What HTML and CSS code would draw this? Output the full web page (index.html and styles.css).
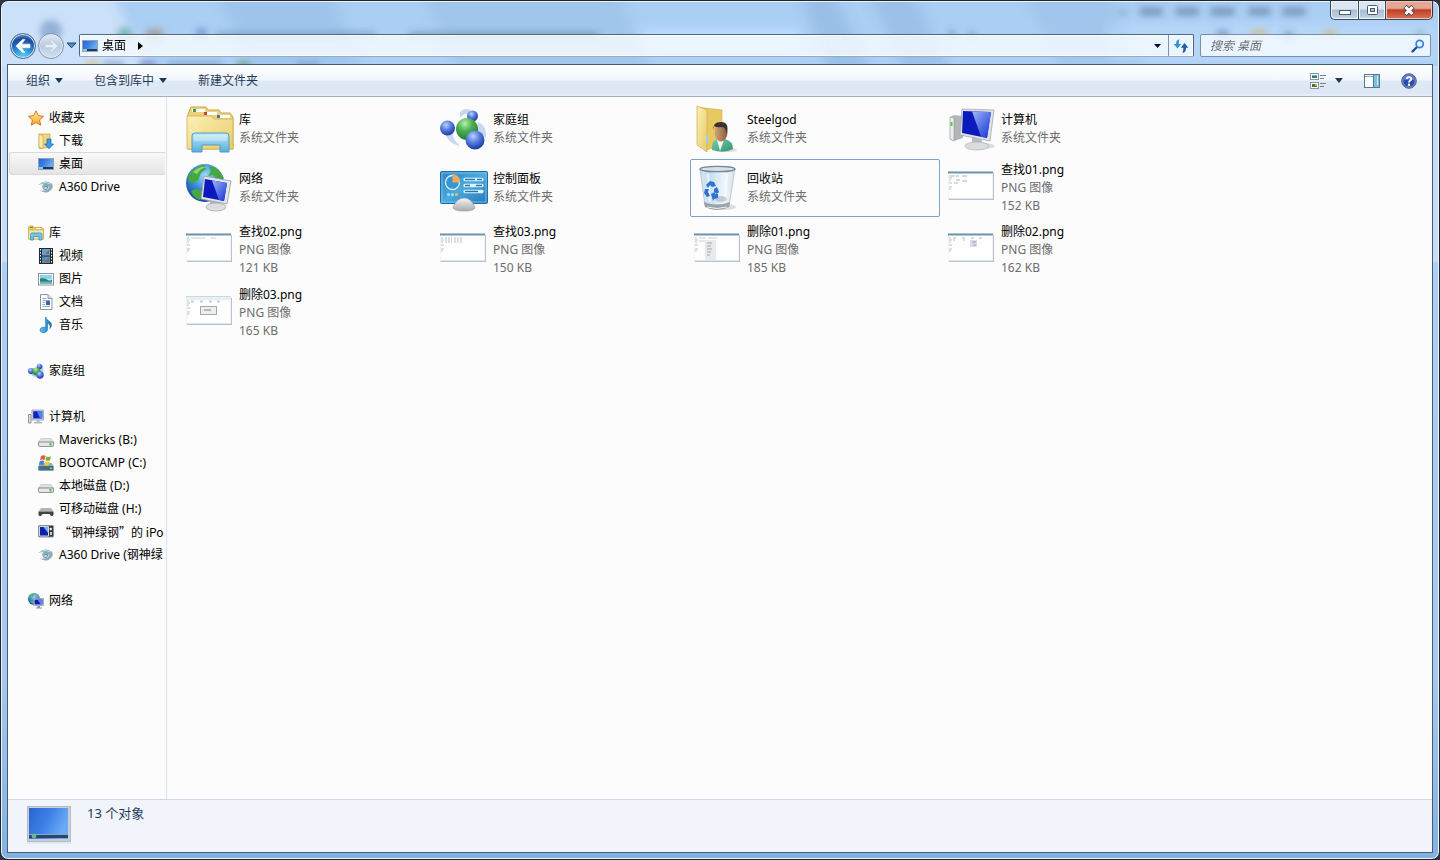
FILE: index.html
```html
<!DOCTYPE html>
<html lang="zh-CN">
<head>
    <meta charset="UTF-8">
    <meta name="viewport" content="width=device-width, initial-scale=1.0">
    <title>桌面</title>
    <link rel="stylesheet" href="styles.css">
</head>
<body>
<div class="window">
    <!-- Aero glass: slanted light streaks and whatever is behind the window -->
    <svg class="glass" viewBox="0 0 1440 64" preserveAspectRatio="none" aria-hidden="true">
        <defs>
            <filter id="soft" x="-20%" y="-50%" width="140%" height="200%"><feGaussianBlur stdDeviation="6"/></filter>
            <filter id="soft2" x="-20%" y="-100%" width="140%" height="300%"><feGaussianBlur stdDeviation="3"/></filter>
        </defs>
        <g filter="url(#soft)">
            <path d="M-20 -10H110L150 74H-20Z" fill="#d3e5fa" opacity=".8"/>
            <path d="M215 -10H330L362 74H255Z" fill="#8fb7e0" opacity=".4"/>
            <path d="M422 -10H615L655 74H460Z" fill="#97bde4" opacity=".5"/>
            <path d="M800 -10H832L875 74H830Z" fill="#84add9" opacity=".45"/>
            <path d="M870 -10H910L955 74H905Z" fill="#8fb5de" opacity=".55"/>
            <path d="M1025 -10H1110L1150 74H1065Z" fill="#93b9e2" opacity=".4"/>
            <path d="M640 26H800V50H640Z" fill="#c3e1ff" opacity=".7"/>
            <path d="M1110 20H1440V60H1110Z" fill="#bcdafa" opacity=".6"/>
        </g>
        <g filter="url(#soft2)">
            <circle cx="49" cy="29" r="11" fill="#7e9cc8" opacity=".7"/>
            <circle cx="123" cy="33" r="8" fill="#63aaa0" opacity=".7"/>
            <path d="M145 27h16v12h-16z" fill="#a0907e" opacity=".7"/>
            <circle cx="200" cy="31" r="6" fill="#6c93c6" opacity=".7"/>
            <path d="M215 30h160v4H215zM408 30h190v5H408z" fill="#5e7ea2" opacity=".6"/>
            <path d="M1141 5h23v9h-23zM1177 5h23v9h-23zM1212 5h24v9h-24zM1250 5h22v9h-22zM1284 5h23v9h-23z" fill="#52729a" opacity=".5"/>
            <path d="M1120 9h8v3h-8zM970 30h6v6h-6zM950 28h5v8h-5zM1218 28h12v8h-12zM1285 30h10v8h-10z" fill="#52729a" opacity=".5"/>
            <path d="M1252 28h16v8h-16zM1326 28h12v8h-12z" fill="#d3b65e" opacity=".6"/>
            <circle cx="1422" cy="33" r="5" fill="#7fb0a8" opacity=".5"/>
            <path d="M84 60h14v4H84z" fill="#cdb976"/>
            <path d="M138 60h16v4h-16z" fill="#6670b8"/>
            <path d="M235 60h14v4h-14z" fill="#5a9166"/>
            <path d="M166 60h55v4h-55zM296 60h22v4h-22zM102 60h20v4h-20z" fill="#7d9cc4"/>
        </g>
    </svg>

    <header class="titlebar">
        <div class="caption">
            <button class="cap cap-min" aria-label="最小化"><svg width="14" height="7" viewBox="0 0 14 7"><rect x="1.5" y="1.5" width="11" height="4" fill="#fff" stroke="#4b5a6d"/></svg></button>
            <button class="cap cap-max" aria-label="最大化"><svg width="13" height="11" viewBox="0 0 13 11"><rect x="1.5" y=".5" width="10" height="9" rx="1" fill="#fff" stroke="#4b5a6d"/><rect x="4.5" y="3.5" width="4" height="3" fill="#a9c2de" stroke="#4b5a6d"/></svg></button>
            <button class="cap cap-close" aria-label="关闭"><svg width="14" height="11" viewBox="0 0 14 11"><path d="M3 1.500L11 9.500M11 1.500L3 9.500" stroke="#59464f" stroke-width="4.800"/><path d="M3.500 2L10.500 9M10.500 2L3.500 9" stroke="#fff" stroke-width="3"/></svg></button>
        </div>
        <div class="navbar">
            <div class="travel">
                <button class="round back" aria-label="返回"><svg width="16" height="16" viewBox="0 0 16 16"><path d="M1 8L7.500 1.500H10L6.500 6.200H15V9.800H6.500L10 14.500H7.500Z" fill="#fff" stroke="#fff" stroke-width=".6"/></svg></button>
                <button class="round forward" aria-label="前进"><svg width="16" height="16" viewBox="0 0 16 16"><path d="M15 8L8.500 2H6.500L9.500 6.300H2V9.700H9.500L6.500 14H8.500Z" fill="#e6eef5" stroke="#bcc9d6" stroke-width=".7"/></svg></button>
                <button class="recent" aria-label="最近浏览的位置"><svg width="11" height="7" viewBox="0 0 11 7"><path d="M1 1H10L5.500 5.800Z" fill="#4c8fcf" stroke="#20466f"/></svg></button>
            </div>
            <div class="address">
                <svg class="i16" viewBox="0 0 16 16"><use href="#desk"/></svg>
                <button class="crumb">桌面</button>
                <button class="crumb-arrow" aria-label="展开"><svg width="5" height="8" viewBox="0 0 5 8"><path d="M0 0L5 4L0 8Z"/></svg></button>
                <button class="drop" aria-label="以前的位置"><svg width="7" height="4" viewBox="0 0 7 4"><path d="M0 0H7L3.500 4Z" fill="#000c3d"/></svg></button>
                <button class="refresh" aria-label="刷新"><svg width="16" height="16" viewBox="0 0 16 16"><path d="M6.500 1.500C4 1.500 3 3.500 3 6H.8L4.500 10.500L8.200 6H5.800C5.800 4 5.800 3 6.500 1.500Z" fill="#3a93d8"/><path d="M9.500 15C12 15 13 13 13 9.800H15.300L11.500 5L7.800 9.800H10.300C10.300 12 10.200 13.500 9.500 15Z" fill="#1f5dab"/></svg></button>
            </div>
            <label class="search">
                <input type="text" placeholder="搜索 桌面" aria-label="搜索 桌面">
                <svg width="14" height="14" viewBox="0 0 14 14"><path d="M6 8L1.500 12.500" stroke="#1c4b96" stroke-width="2.400" stroke-linecap="round"/><circle cx="8.700" cy="5" r="3.600" fill="#e3f2ff" stroke="#3a82d0" stroke-width="1.700"/></svg>
            </label>
        </div>
    </header>

    <div class="client">
        <div class="toolbar">
            <button class="tool">组织 <svg width="8" height="5" viewBox="0 0 8 5"><path d="M0 0H8L4 5Z"/></svg></button>
            <button class="tool">包含到库中 <svg width="8" height="5" viewBox="0 0 8 5"><path d="M0 0H8L4 5Z"/></svg></button>
            <button class="tool">新建文件夹</button>
            <div class="tool-icons">
                <button class="tool view" aria-label="更改您的视图">
                    <svg width="17" height="16" viewBox="0 0 17 16"><rect x=".5" y=".5" width="8" height="6" fill="#fff" stroke="#8b95a2"/><path d="M2 2h5v1H2z" fill="#69b4e8"/><path d="M2 3h5v2H2z" fill="#2f7d62"/><rect x=".5" y="9.500" width="8" height="6" fill="#fff" stroke="#8b95a2"/><path d="M2 11h3v3H2z" fill="#3a7a2d"/><path d="M5 11h2v2H5z" fill="#e0aa28"/><path d="M5 13h2v1H5z" fill="#3567b0"/><path d="M10 2.500h6M10 5.500h4M10 10.500h6M10 13.500h4" stroke="#6c7f9b"/></svg>
                    <svg width="8" height="5" viewBox="0 0 8 5"><path d="M0 0H8L4 5Z"/></svg>
                </button>
                <button class="tool" aria-label="显示预览窗格"><svg width="16" height="14" viewBox="0 0 16 14"><rect x=".5" y=".5" width="15" height="13" fill="#fff" stroke="#587796"/><path d="M1 2.500H10" stroke="#91a7bb"/><rect x="10" y="1" width="5" height="12" fill="#7dc3df"/><path d="M9.500 1V13" stroke="#587796"/><path d="M13 2h1v9h-1z" fill="#c3eefa"/></svg></button>
                <button class="tool" aria-label="获取帮助"><svg width="16" height="16" viewBox="0 0 16 16"><circle cx="8" cy="8" r="7.300" fill="#2a4bac" stroke="#606978"/><circle cx="8" cy="8" r="6.200" fill="none" stroke="#a9bdf0" stroke-width=".7"/><path d="M2.500 7A5.500 5 0 0 1 13.500 7Z" fill="#5579cc"/><path d="M5.700 6C5.800 3.500 10.300 3.500 10.300 6C10.300 7.600 8 7.500 8 9.400" fill="none" stroke="#fff" stroke-width="1.900"/><circle cx="8" cy="11.700" r="1.200" fill="#fff"/></svg></button>
            </div>
        </div>

        <div class="body">
            <nav class="tree">
                <ul>
                    <li><a href="#" class="root"><svg class="i16" viewBox="0 0 16 16"><path d="M8 .8L10.300 5.700L15.500 6.300L11.600 9.900L12.700 15.200L8 12.500L3.300 15.200L4.400 9.900L.5 6.300L5.700 5.700Z" fill="url(#gStar)" stroke="#d9761c"/></svg>收藏夹</a></li>
                    <li><a href="#"><svg class="i16" viewBox="0 0 16 16"><path d="M1 1H12V14L4 15.500H1Z" fill="#edd57e" stroke="#c3a449" stroke-width=".7"/><path d="M1 1L5 3V15.800L1 14Z" fill="#f9ebaa" stroke="#c3a449" stroke-width=".6"/><path d="M9 6h4v5h2.500L11 15.700L6.500 11H9Z" fill="#3d9ce5" stroke="#1763a8" stroke-width=".7"/></svg>下载</a></li>
                    <li><a href="#" class="selected"><svg class="i16" viewBox="0 0 16 16"><use href="#desk"/></svg>桌面</a></li>
                    <li><a href="#"><svg class="i16" viewBox="0 0 16 16"><use href="#a360"/></svg>A360 Drive</a></li>
                </ul>
                <ul>
                    <li><a href="#" class="root"><svg class="i16" viewBox="0 0 16 16"><path d="M.5 2.500L1.500 1H5L6 2.500H14L15.500 4V14H.5Z" fill="#e6cb6c" stroke="#c3a24a" stroke-width=".8"/><path d="M2 2h3v1H2z" fill="#4aa145"/><path d="M8 3h5v1H8z" fill="#fff"/><path d="M.5 5H15.500V14H.5Z" fill="#f6e7a5" stroke="#cdae50" stroke-width=".7"/><path d="M2.500 15V9.500Q2.500 8 4 8H12.500Q14 8 14 9.500V15H11V11.500H5.500V15Z" fill="#74c4e8" stroke="#3f91be" stroke-width=".8"/></svg>库</a></li>
                    <li><a href="#"><svg class="i16" viewBox="0 0 16 16"><path d="M1 0H15V16H1Z" fill="#22282e"/><path d="M4 1H12V7.500H4Z" fill="#5ba4d4"/><path d="M4 8.500H12V15H4Z" fill="#4a93c6"/><path d="M5 2L8 5L11 2V6H8ZM5 10L8 13L11 10V14H7Z" fill="#b7542d"/><path d="M2.500 1V16M13.500 1V16" stroke="#fff" stroke-dasharray="1.500 1.500"/></svg>视频</a></li>
                    <li><a href="#"><svg class="i16" viewBox="0 0 16 16"><rect x=".5" y="2.500" width="15" height="11.500" fill="#fff" stroke="#8a939b"/><path d="M2 4H14V8.500H2Z" fill="#90d0ef"/><path d="M2 7.500Q6 6.500 9 8.500T14 8.500V12.500H2Z" fill="#2a7f72"/><path d="M2 10.500H14V12.500H2Z" fill="#5db5c9"/></svg>图片</a></li>
                    <li><a href="#"><svg class="i16" viewBox="0 0 16 16"><path d="M2.500 .5H10L14 4.500V15.500H2.500Z" fill="#fff" stroke="#8a97a6"/><path d="M10 .5V4.500H14" fill="#dbe4ee" stroke="#8a97a6"/><path d="M4.500 4.500H8.500M4.500 6.500H12M4.500 8.500H7M4.500 10.500H7M4.500 12.500H12" stroke="#8fa7c3"/><path d="M8 7h4v4H8z" fill="#3765a2"/></svg>文档</a></li>
                    <li><a href="#"><svg class="i16" viewBox="0 0 16 16"><path d="M8 0C8 4 14 4 13.500 8.500C13.300 10 12.500 10.800 11.800 11.500C13 8 11 7 9.500 6.500V12C9.500 17 2 16.500 2 13C2 10.500 5 9.700 7.600 10.700V0Z" fill="url(#gNote)" stroke="#1c69ab" stroke-width=".6"/></svg>音乐</a></li>
                </ul>
                <ul>
                    <li><a href="#" class="root"><svg class="i16" viewBox="0 0 16 16"><path d="M9 2Q14 0 15.500 5V11H12ZM1 9Q3 14 9 14L6 9Z" fill="#b8cfeb"/><circle cx="3" cy="8" r="3" fill="url(#gBlue)"/><circle cx="11.500" cy="3.500" r="2.800" fill="url(#gBlue)"/><circle cx="8.500" cy="8.500" r="4" fill="url(#gGreen)"/><circle cx="12" cy="12" r="3.700" fill="url(#gBlue)"/></svg>家庭组</a></li>
                </ul>
                <ul>
                    <li><a href="#" class="root"><svg class="i16" viewBox="0 0 16 16"><path d="M.5 5.500H3V14H.5Z" fill="#dadcde" stroke="#81878d" stroke-width=".8"/><path d="M4 1H15.500V11H4Z" fill="#d8dde3" stroke="#8b9299" stroke-width=".7"/><path d="M5.200 2.200H14.300V9.500H5.200Z" fill="#0c23c0"/><path d="M9 2.200H14.300V9.500H12Z" fill="#4f83ee"/><path d="M8.500 11H11.500V13H14V14.500H6V13H8.500Z" fill="#b5bac0"/></svg>计算机</a></li>
                    <li><a href="#"><svg class="i16" viewBox="0 0 16 16"><use href="#drive"/></svg>Mavericks (B:)</a></li>
                    <li><a href="#"><svg class="i16" viewBox="0 0 16 16"><path d="M2.500 8H13.500L15.500 11V15.500H.5V11Z" fill="#8fabba"/><path d="M.5 11H15.500V15.500H.5Z" fill="#456e85"/><path d="M12 12.500h2v1.500h-2z" fill="#70e858"/><path d="M3 1Q5.500-.5 7.500 1L6.500 5Q4.500 4 2 5Z" fill="#e85e29"/><path d="M8.300 1.500Q10.500 2.500 13 1.300L12 5.300Q9.500 6.300 7.500 5.300Z" fill="#6fb43d"/><path d="M1.800 6Q4.500 4.900 6.300 6L5.300 10Q3 9 .8 10Z" fill="#3c85d4"/><path d="M7.200 6.300Q9.500 7.300 11.800 6.300L10.800 10.300Q8.500 11.200 6.200 10.300Z" fill="#f5c732"/></svg>BOOTCAMP (C:)</a></li>
                    <li><a href="#"><svg class="i16" viewBox="0 0 16 16"><use href="#drive"/></svg>本地磁盘 (D:)</a></li>
                    <li><a href="#"><svg class="i16" viewBox="0 0 16 16"><path d="M3 7H13L15.500 10.500H.5Z" fill="#b1b3b5"/><path d="M.5 10.500H15.500V13.500Q15.500 15 14 15H13L11.500 13H4.500L3 15H2Q.5 15 .5 13.500Z" fill="#414446"/></svg>可移动磁盘 (H:)</a></li>
                    <li><a href="#"><svg class="i16" viewBox="0 0 16 16"><rect x=".5" y="1.500" width="15" height="11.500" rx="1" fill="#343a40" stroke="#8d939a"/><path d="M2 3H10V11.500H2Z" fill="#0721b2"/><path d="M5.500 3H10V9Z" fill="#87a8f2"/><path d="M1.500 2.500H10.500V12H1.500Z" fill="none" stroke="#fff" stroke-width=".8"/><circle cx="12.800" cy="5" r="1.200" fill="#eef1f4"/><path d="M12 8h2v3h-2z" fill="#c8ced5"/></svg><span class="cjk">“钢神绿钢”的 iPo</span></a></li>
                    <li><a href="#"><svg class="i16" viewBox="0 0 16 16"><use href="#a360"/></svg>A360 Drive (钢神绿</a></li>
                </ul>
                <ul>
                    <li><a href="#" class="root"><svg class="i16" viewBox="0 0 16 16"><circle cx="6" cy="6" r="6" fill="url(#gGlobe)"/><path d="M1.500 3Q4 .3 7 .5L5 4L2.500 5.500ZM9 2L11.500 4L9.500 5ZM2 8L5 8.500L4.500 11Z" fill="#5cbf50"/><path d="M5.500 5.500H15.500V12.500H5.500Z" fill="#dfe4e9" stroke="#8f969e" stroke-width=".7"/><path d="M6.500 6.500H14.500V11.500H6.500Z" fill="#0b19bd"/><path d="M9.500 6.500H14.500V11.500H12.500Z" fill="#5583ee"/><path d="M9.500 13H12V14.500H14V15.500H8V14.500H9.500Z" fill="#8f969c"/></svg>网络</a></li>
                </ul>
            </nav>

            <main class="files">
                <a href="#" class="tile"><svg class="i48" viewBox="0 0 48 48"><use href="#library"/></svg><span class="info"><b>库</b><span>系统文件夹</span></span></a>
                <a href="#" class="tile">
                    <svg class="i48" viewBox="0 0 48 48"><path d="M4 24Q6 38 20 41Q11 33 12 24ZM20 7Q24 2 31 5L27 9Q24 9 20 12ZM38 17Q47 20 46 33Q42 28 37 31Z" fill="#b8cfeb" opacity=".8"/><circle cx="7.500" cy="23" r="7.500" fill="url(#gBlue)"/><circle cx="32.500" cy="11" r="5.500" fill="url(#gBlue)"/><circle cx="27" cy="24" r="11" fill="url(#gGreen)"/><circle cx="35" cy="35" r="9.500" fill="url(#gBlue)"/></svg>
                    <span class="info"><b>家庭组</b><span>系统文件夹</span></span>
                </a>
                <a href="#" class="tile">
                    <svg class="i48" viewBox="0 0 48 48"><path d="M3 2L28 5V40L12 45Z" fill="#e8c95f" stroke="#d0ad45" stroke-width=".6"/><path d="M3 1L13 5V47L3 40Z" fill="url(#gFolder)" stroke="#cfae4d" stroke-width=".7"/><path d="M12 30L14 29V38L12 39Z" fill="#a8cbdb"/><ellipse cx="33" cy="45" rx="10" ry="2" fill="#000" opacity=".12"/><path d="M18 45Q17 35 24 34H31Q39 36 39 44Q30 49 18 45Z" fill="url(#gCoat)"/><path d="M23 35L26 46L30 35Z" fill="#edf7f5"/><ellipse cx="27" cy="27" rx="6.500" ry="9.500" fill="url(#gSkin)"/><path d="M20 25Q18 17 27 17Q36 17 32.500 29Q32 22 27.500 22Q23 23 20 21Z" fill="#39332f"/></svg>
                    <span class="info"><b>Steelgod</b><span>系统文件夹</span></span>
                </a>
                <a href="#" class="tile">
                    <svg class="i48" viewBox="0 0 48 48"><ellipse cx="34" cy="41" rx="13" ry="3" fill="#000" opacity=".12"/><path d="M2 12L6 10L15 11V33L6 36L2 34Z" fill="#b2b6b9"/><path d="M2 12L6 13V36L2 34Z" fill="#eceeef" stroke="#8e9396" stroke-width=".6"/><path d="M3.500 17v4" stroke="#55cd33" stroke-width="2"/><path d="M24 32L34 35V42H24Z" fill="#b9bec3"/><ellipse cx="29" cy="41" rx="12" ry="4" fill="#dadde0" stroke="#a3a8ad" stroke-width=".6"/><path d="M14 4L46 5L42 36L12 30Z" fill="#dfe3e7" stroke="#999fa5" stroke-width=".7"/><path d="M15 6L43 7L39 33L14 28Z" fill="#0b19bd"/><path d="M24 6.500L43 7L39 33L33 31.500Z" fill="url(#gScreen)"/></svg>
                    <span class="info"><b>计算机</b><span>系统文件夹</span></span>
                </a>

                <a href="#" class="tile">
                    <svg class="i48" viewBox="0 0 48 48"><circle cx="19" cy="19" r="19" fill="url(#gGlobe)"/><path d="M4 9Q11 1 19 1L20 5L15 9L12 16L8 19L3 18Q1 13 4 9ZM23 2Q33 3 38 14L32 15L27 11L22 12L25 7ZM9 25L17 27L18 33L13 36Q7 33 5 27Z" fill="#46a83e"/><path d="M7 8Q13 2 22 3Q14 4 11 10Z" fill="#e1fac5" opacity=".5"/><path d="M24 34H34V43H24Z" fill="#b5bbc0"/><ellipse cx="30" cy="43" rx="10" ry="4" fill="#dcdfe2" stroke="#9ba1a6" stroke-width=".7"/><path d="M18 12L45 17L41 40L15 35Z" fill="#e3e7ea" stroke="#959ba1" stroke-width=".8"/><path d="M19 15L41 19L38 37L17 33Z" fill="#0b19bd"/><path d="M26 16.500L41 19L38 37L33 36Z" fill="url(#gScreen)"/></svg>
                    <span class="info"><b>网络</b><span>系统文件夹</span></span>
                </a>
                <a href="#" class="tile">
                    <svg class="i48" viewBox="0 0 48 48"><rect x=".5" y="7.500" width="47" height="32" rx="1" fill="url(#gPanel)" stroke="#1e6fab"/><rect x="2" y="9" width="44" height="29" fill="none" stroke="#82cbee" stroke-width=".8"/><circle cx="12.500" cy="18.500" r="7" fill="#3995d0" stroke="#d3f1ff" stroke-width="1.300"/><path d="M12.500 18.500V10A8 8 0 0 1 20 18.500Z" fill="#f3aa58"/><path d="M25 15.500H42M25 21.500H42M25 27.500H42" stroke="#e0f5ff" stroke-width="3.400" stroke-linecap="round"/><path d="M25 15.500H35M37 15.500H42M25 21.500H30M36 21.500H42M25 27.500H38" stroke="#2a75b0" stroke-width="1.400"/><circle cx="8.500" cy="30.500" r="1.500" fill="#91e7ff"/><circle cx="12.500" cy="30.500" r="1.500" fill="#91e7ff"/><circle cx="16.500" cy="30.500" r="1.500" fill="#f5bc58"/><path d="M13 43Q17 34 24 34T35 43Q35 47 24 47T13 43Z" fill="url(#gGrey)" stroke="#92979b" stroke-width=".6"/></svg>
                    <span class="info"><b>控制面板</b><span>系统文件夹</span></span>
                </a>
                <a href="#" class="tile focused">
                    <svg class="i48" viewBox="0 0 48 48"><ellipse cx="32" cy="43" rx="10" ry="3" fill="#000" opacity=".12"/><path d="M6 5L11 42Q23 49 35 42L41 5Z" fill="url(#gBin)" stroke="#aeb9c2" stroke-width=".7"/><path d="M14 10L16 38M33 10L31 38" stroke="#fff" stroke-width="2" opacity=".65"/><ellipse cx="27" cy="35" rx="6" ry="3" fill="#9aa5b0" opacity=".5"/><path d="M10 38Q22 43 36 38L35 43Q23 49 11 43Z" fill="#8f969c" opacity=".85"/><path d="M13 43Q23 46 33 43" stroke="#eef0f2" fill="none"/><ellipse cx="23.500" cy="5" rx="17.500" ry="2.700" fill="#d4e2ee" stroke="#77838c" stroke-width="1.300"/><path d="M12 21L16 17L20 18L22 22L18 23L16 21L14 24ZM11 25L15 25L14 28L16 32L13 33L10 29ZM17 30L21 28V30H24V34L20 35L19 37ZM20 25L23 23L25 28L23 30L20 28Z" fill="#2e72d2"/></svg>
                    <span class="info"><b>回收站</b><span>系统文件夹</span></span>
                </a>
                <a href="#" class="tile">
                    <svg class="i48" viewBox="0 0 48 48"><use href="#shot"/><path d="M3 12h4M8 12h3M14 12h5M8 16h4M6 19h4M14 17h5" stroke="#7795ad" opacity=".65"/></svg>
                    <span class="info"><b>查找01.png</b><span>PNG 图像</span><span>152 KB</span></span>
                </a>

                <a href="#" class="tile">
                    <svg class="i48" viewBox="0 0 48 48"><use href="#shot"/><path d="M5 12h14M25 12h5" stroke="#78b39a" opacity=".5"/></svg>
                    <span class="info"><b>查找02.png</b><span>PNG 图像</span><span>121 KB</span></span>
                </a>
                <a href="#" class="tile">
                    <svg class="i48" viewBox="0 0 48 48"><use href="#shot"/><path d="M5 12h7M14 12h9M5 14h7M14 14h9M5 16h7M14 16h9" stroke="#81909d" stroke-dasharray="2 1" opacity=".55"/></svg>
                    <span class="info"><b>查找03.png</b><span>PNG 图像</span><span>150 KB</span></span>
                </a>
                <a href="#" class="tile">
                    <svg class="i48" viewBox="0 0 48 48"><use href="#shot"/><path d="M5 12h7M14 12h9M5 15h16" stroke="#81909d" opacity=".4"/><path d="M11 14h11v20H11z" fill="#e8eaec"/><path d="M13 17h5M13 20h4M13 23h5M13 26h4M13 29h3" stroke="#727f89" opacity=".6"/></svg>
                    <span class="info"><b>删除01.png</b><span>PNG 图像</span><span>185 KB</span></span>
                </a>
                <a href="#" class="tile">
                    <svg class="i48" viewBox="0 0 48 48"><use href="#shot"/><path d="M5 12h3M14 12h3M23 12h3M31 12h3M5 14h2M15 14h2" stroke="#5080a6" opacity=".5"/><path d="M22 14h7v7h-7z" fill="#d9dfe5"/><path d="M24 16h4M25 19h3" stroke="#98a5b1" fill="none"/></svg>
                    <span class="info"><b>删除02.png</b><span>PNG 图像</span><span>162 KB</span></span>
                </a>

                <a href="#" class="tile">
                    <svg class="i48" viewBox="0 0 48 48"><use href="#shot"/><path d="M0 7.500h45V11H0z" fill="#e6f0f3"/><path d="M5 12.500h3M14 12.500h3M23 12.500h3M31 12.500h3" stroke="#658ba7" stroke-width="2" opacity=".4"/><rect x="14.500" y="17.500" width="16" height="8" fill="#eceef0" stroke="#a1a9af"/><path d="M18 21h7" stroke="#7b858c"/></svg>
                    <span class="info"><b>删除03.png</b><span>PNG 图像</span><span>165 KB</span></span>
                </a>
            </main>
        </div>

        <footer class="details">
            <svg width="44" height="38" viewBox="0 0 44 38"><rect x=".5" y=".5" width="43" height="35" fill="#c9cfd5" stroke="#b4bbc2"/><path d="M2 2H41V33H2Z" fill="url(#gDesk)"/><path d="M2 29H41V32H2Z" fill="#27476c"/><path d="M2 28.500H41" stroke="#84a5ce"/><circle cx="7" cy="30" r="2.400" fill="#69b889"/><path d="M0 37H44" stroke="#000" opacity=".1"/></svg>
            <span>13 个对象</span>
        </footer>
    </div>
</div>

<!-- Shared icons -->
<svg class="sprite" aria-hidden="true">
    <defs>
        <linearGradient id="gStar" x2="0" y2="1"><stop stop-color="#fff3a0"/><stop offset="1" stop-color="#f7a02b"/></linearGradient>
        <linearGradient id="gNote"><stop stop-color="#59c5f5"/><stop offset="1" stop-color="#1970c0"/></linearGradient>
        <linearGradient id="gFolder" x2="1" y2="1"><stop stop-color="#fcf0b5"/><stop offset="1" stop-color="#e8cb69"/></linearGradient>
        <linearGradient id="gCoat" x2="1" y2="1"><stop stop-color="#82c9a9"/><stop offset="1" stop-color="#2e9673"/></linearGradient>
        <linearGradient id="gSkin"><stop stop-color="#d5a67b"/><stop offset="1" stop-color="#865a3c"/></linearGradient>
        <linearGradient id="gScreen" x2="1" y2="1"><stop stop-color="#9db8f7"/><stop offset="1" stop-color="#1530d4"/></linearGradient>
        <linearGradient id="gPanel" x2="1" y2="1"><stop stop-color="#2c83c5"/><stop offset=".5" stop-color="#4ba9dd"/><stop offset="1" stop-color="#2577b8"/></linearGradient>
        <linearGradient id="gGrey" x2="0" y2="1"><stop stop-color="#f4f5f6"/><stop offset="1" stop-color="#a6abaf"/></linearGradient>
        <linearGradient id="gBin"><stop stop-color="#d5e5f0"/><stop offset=".3" stop-color="#c9dff3"/><stop offset=".7" stop-color="#eff6fb"/><stop offset="1" stop-color="#d6e1e9"/></linearGradient>
        <linearGradient id="gDesk" x2="1" y2=".4"><stop stop-color="#2865d2"/><stop offset=".5" stop-color="#3b7ee5"/><stop offset="1" stop-color="#6babf5"/></linearGradient>
        <linearGradient id="gTray" x2="0" y2="1"><stop stop-color="#c5ecf9"/><stop offset="1" stop-color="#55addb"/></linearGradient>
        <radialGradient id="gBlue" cx=".4" cy=".3" r=".65"><stop stop-color="#bcd3ff"/><stop offset=".5" stop-color="#5c80e0"/><stop offset="1" stop-color="#2442ab"/></radialGradient>
        <radialGradient id="gGreen" cx=".4" cy=".25" r=".75"><stop stop-color="#b9efb2"/><stop offset=".45" stop-color="#4cb050"/><stop offset="1" stop-color="#1f7d33"/></radialGradient>
        <radialGradient id="gGlobe" cx=".5" cy=".3" r=".7"><stop stop-color="#9edcff"/><stop offset=".5" stop-color="#3b8fda"/><stop offset="1" stop-color="#17479f"/></radialGradient>

        <symbol id="desk" viewBox="0 0 16 16"><path d="M0 2H16V14H0Z" fill="#8fa3b9"/><path d="M1 3H15V11H1Z" fill="url(#gDesk)"/><path d="M1 11H15V13H1Z" fill="#26384f"/><path d="M1 11h4v2H1z" fill="#7ad0eb"/></symbol>
        <symbol id="a360" viewBox="0 0 16 16"><path d="M0 6Q7 0 13.500 4.500Q17 9 10.500 13Q6 14.500 2 11.500Q7 12.500 10 10Q12.500 7 8 7Q5 7.500 5 9Q2.500 7 6 5.500Q3 5 0 6Z" fill="#8eabbb"/><path d="M5 9Q6 6.500 9 7T8 11Q5 11.500 5 9Z" fill="#5f8ba4"/><path d="M6 9Q7 7.500 8.500 8.200T7.500 10Q6.300 10 6 9Z" fill="#dfeaf0"/><path d="M2 5.300Q7 2 12.500 5" fill="none" stroke="#cfe0e8" stroke-width=".9"/></symbol>
        <symbol id="drive" viewBox="0 0 16 16"><path d="M3 6.500H13L15.500 10H.5Z" fill="#dfe0e1" stroke="#b5b7b9" stroke-width=".5"/><path d="M.5 10H15.500V13Q15.500 14.500 14 14.500H2Q.5 14.500 .5 13Z" fill="#e6e7e8" stroke="#85898c" stroke-width=".9"/><path d="M11.500 11h2v2.500h-2z" fill="#3dc33a"/></symbol>
        <symbol id="library" viewBox="0 0 48 48">
            <path d="M2 9L5 2H20L22 5H33L35 8H44L47 12V44H2V9Z" fill="#ebd37c" stroke="#c9a849"/>
            <path d="M6 4h13v3H6zM18 7h13v3H18zM31 10h13v3H31z" fill="#fff"/>
            <path d="M7 4h3v3H7z" fill="#459a3b"/><path d="M18 7h3v3h-3z" fill="#c9432e"/><path d="M31 10h3v3h-3z" fill="#2d7fb7"/>
            <path d="M1 11H25L28 14H47V44H1Z" fill="url(#gFolder)" stroke="#cdae50" stroke-width=".8"/>
            <path d="M10 20v16M3 34L17 22M3 24L17 33" stroke="#fffbe0" stroke-width=".7" opacity=".6"/>
            <path d="M6 47V31Q6 28 9 28H40Q43 28 43 31V47H34V40H16V47Z" fill="url(#gTray)" stroke="#4a9dc6"/>
            <path d="M8 31Q8 30 10 30H39Q41 30 41 32V36H8Z" fill="#fff" opacity=".3"/>
        </symbol>
        <symbol id="shot" viewBox="0 0 48 48">
            <path d="M1 9H46V36H1Z" fill="#b4b8bd"/><path d="M0 8H45V35H0Z" fill="#fefefe" stroke="#d3dae0" stroke-width=".6"/>
            <path d="M0 7.500H45V9.500H0Z" fill="#6f93ab"/><path d="M1 12h2M1 14h3M1 16h2M1 19h3M1 23h3M1 25h2" stroke="#8b9da9" opacity=".6"/><path d="M1 34.500H45" stroke="#d6e8f2"/>
        </symbol>
    </defs>
</svg>
</body>
</html>
```
FILE: styles.css
```css
* {
    box-sizing: border-box;
}
body {
    margin: 0;
    background-color: #32353b;
    font-family: "Noto Sans", "Noto Sans CJK SC", sans-serif;
    font-size: 12px;
    line-height: 18px;
    color: #000;
}
button {
    font: inherit;
    color: inherit;
    background: none;
    border: none;
    padding: 0;
    display: flex;
    align-items: center;
    justify-content: center;
}
svg {
    display: block;
    flex: none;
}
.sprite {
    width: 0;
    height: 0;
}
.i16 {
    width: 16px;
    height: 16px;
}
.i48 {
    width: 48px;
    height: 48px;
}
.cjk {
    font-family: "Noto Sans CJK SC", sans-serif;
}

/* Window frame */
.window {
    position: relative;
    display: flex;
    flex-direction: column;
    min-height: 100vh;
    padding: 0 6px 6px;
    border: 1px solid #20242d;
    border-radius: 8px;
    box-shadow: inset 0 0 0 1px #e9f4ff;
    background: linear-gradient(#c9ddf5 260px, #abcff5 262px, #a4c8ee 680px, #83b1e0);
    overflow: hidden;
}
.glass {
    position: absolute;
    top: 1px;
    left: 1px;
    width: calc(100% - 2px);
    height: 64px;
    background: linear-gradient(#a9cdf3, #aed0f5);
    border-radius: 6px 6px 0 0;
}
.titlebar {
    position: relative;
}
.caption {
    display: flex;
    justify-content: flex-end;
    height: 19px;
}
.cap {
    width: 28px;
    height: 19px;
    border: 1px solid #3f4b5c;
    border-top: none;
    border-right: none;
    background: linear-gradient(#dbe6f2 45%, #a9bdd3 50%, #c4d6e8);
    box-shadow: inset 0 0 0 1px #edf5fc;
}
.cap-min {
    border-radius: 0 0 0 5px;
    padding-top: 5px;
}
.cap-max {
    width: 27px;
}
.cap-close {
    width: 48px;
    border-right: 1px solid #3f2a30;
    border-radius: 0 0 5px 0;
    background: linear-gradient(#e5a795 40%, #c23c20 50%, #d9775a);
    box-shadow: inset 0 0 0 1px #f0c4b6;
}
.navbar {
    display: flex;
    align-items: center;
    height: 44px;
    padding: 7px 2px 0 3px;
}
.travel {
    display: flex;
    align-items: center;
    gap: 2px;
    width: 69px;
}
.round {
    width: 26px;
    height: 26px;
    border-radius: 50%;
    border: 1px solid #526c8e;
    box-shadow: inset 0 0 0 1px #dcebf8;
}
.back {
    background: radial-gradient(circle at 50% 100%, #5bdcfa, #2777cb 50%, #1b4a9c 70%, #93b1dc);
}
.forward {
    border-color: #8094ab;
    background: linear-gradient(#dfe9f2, #b9cce0 50%, #d3e2f0);
}
.address {
    flex: 1;
    display: flex;
    align-items: center;
    height: 23px;
    padding-left: 2px;
    border: 1px solid #52677f;
    border-bottom-color: #93abc4;
    border-radius: 2px;
    background-color: rgba(247, 251, 255, 0.82);
    box-shadow: inset 0 0 0 1px #f8fcff;
}
.crumb {
    margin-left: 4px;
}
.crumb-arrow {
    margin-left: 12px;
}
.drop {
    width: 21px;
    margin-left: auto;
}
.refresh {
    width: 25px;
    height: 21px;
    border-left: 1px solid #7f93a9;
}
.search {
    display: flex;
    align-items: center;
    width: 231px;
    height: 23px;
    margin-left: 6px;
    padding: 0 5px 0 9px;
    border: 1px solid #7890ab;
    border-radius: 2px;
    background-color: rgba(247, 251, 255, 0.82);
}
.search input {
    flex: 1;
    min-width: 0;
    padding: 0;
    border: none;
    outline: none;
    background: none;
    font: inherit;
    font-style: italic;
}
.search input::placeholder {
    color: #6b6f75;
    opacity: 1;
}

/* Client area */
.client {
    position: relative;
    flex: 1;
    display: flex;
    flex-direction: column;
    border: 1px solid #465b75;
    background-color: #fcfcfc;
}
.toolbar {
    display: flex;
    align-items: center;
    gap: 31px;
    height: 32px;
    padding: 0 15px 0 18px;
    border-bottom: 1px solid #a0afc3;
    background: linear-gradient(#fff, #f2f7fd 48%, #dfe8f5 52%, #dde7f4 90%, #e8f0fa);
    color: #1e395b;
    fill: #1e395b;
}
.tool {
    gap: 5px;
}
.tool-icons {
    display: flex;
    align-items: center;
    gap: 21px;
    margin-left: auto;
}
.view {
    gap: 8px;
}
.body {
    flex: 1;
    display: flex;
}

/* Navigation pane */
.tree {
    width: 159px;
    padding: 9px 1px 0;
    border-right: 1px solid #d6e5f5;
}
.tree ul {
    list-style: none;
    margin: 0 0 23px;
    padding: 0;
}
.tree a {
    display: flex;
    align-items: center;
    gap: 5px;
    height: 23px;
    padding-left: 29px;
    color: #000;
    text-decoration: none;
    white-space: nowrap;
}
.tree .root {
    padding-left: 19px;
}
.tree .selected {
    padding-left: 28px;
    border: 1px solid #d9d9d9;
    border-right: none;
    border-radius: 3px 0 0 3px;
    background: linear-gradient(#f8f8f8, #e5e5e5);
}

/* Tiles */
.files {
    flex: 1;
    display: grid;
    grid-template-columns: repeat(auto-fill, 250px);
    grid-template-rows: 57px 58px;
    grid-auto-rows: 61px;
    align-content: start;
    gap: 2px 4px;
    padding: 3px 15px;
}
.tile {
    display: flex;
    align-items: center;
    gap: 5px;
    padding: 0 3px;
    border: 1px solid transparent;
    border-radius: 2px;
    color: #6d6d6d;
    text-decoration: none;
}
.focused {
    border-color: #7da2ce;
}
.info {
    display: flex;
    flex-direction: column;
}
.info b {
    font-weight: normal;
    color: #000;
}

/* Details pane */
.details {
    display: flex;
    gap: 16px;
    height: 53px;
    padding: 6px 19px;
    border-top: 1px solid #ccd9ea;
    background-color: #f1f5fb;
    font-size: 13px;
    line-height: 14px;
    color: #1e395b;
}
```
